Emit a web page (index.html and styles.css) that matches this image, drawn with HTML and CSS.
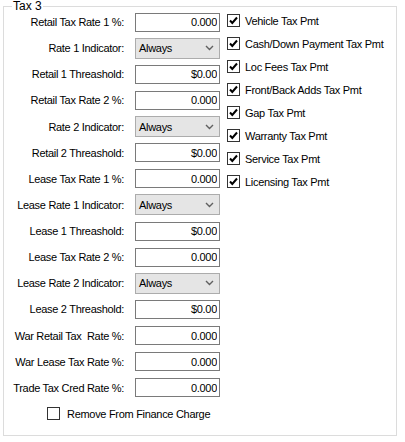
FILE: index.html
```html
<!DOCTYPE html>
<html lang="en">
<head>
  <meta charset="UTF-8" />
  <title>Tax 3</title>
  <link rel="stylesheet" href="styles.css">
</head>
<body>
  <fieldset class="group">
    <legend>Tax 3</legend>
    <div class="cols">
      <div class="fields">
        <label>Retail Tax Rate 1 %:</label>
        <input class="num" type="text" value="0.000">
        <label>Rate 1 Indicator:</label>
        <div class="combo"><span>Always</span><svg width="9" height="6" viewBox="0 0 9 6"><path d="M1 1 L4.5 4.5 L8 1" fill="none" stroke="#606060" stroke-width="1.4"/></svg></div>
        <label>Retail 1 Threashold:</label>
        <input class="num" type="text" value="$0.00">
        <label>Retail Tax Rate 2 %:</label>
        <input class="num" type="text" value="0.000">
        <label>Rate 2 Indicator:</label>
        <div class="combo"><span>Always</span><svg width="9" height="6" viewBox="0 0 9 6"><path d="M1 1 L4.5 4.5 L8 1" fill="none" stroke="#606060" stroke-width="1.4"/></svg></div>
        <label>Retail 2 Threashold:</label>
        <input class="num" type="text" value="$0.00">
        <label>Lease Tax Rate 1 %:</label>
        <input class="num" type="text" value="0.000">
        <label>Lease Rate 1 Indicator:</label>
        <div class="combo"><span>Always</span><svg width="9" height="6" viewBox="0 0 9 6"><path d="M1 1 L4.5 4.5 L8 1" fill="none" stroke="#606060" stroke-width="1.4"/></svg></div>
        <label>Lease 1 Threashold:</label>
        <input class="num" type="text" value="$0.00">
        <label>Lease Tax Rate 2 %:</label>
        <input class="num" type="text" value="0.000">
        <label>Lease Rate 2 Indicator:</label>
        <div class="combo"><span>Always</span><svg width="9" height="6" viewBox="0 0 9 6"><path d="M1 1 L4.5 4.5 L8 1" fill="none" stroke="#606060" stroke-width="1.4"/></svg></div>
        <label>Lease 2 Threashold:</label>
        <input class="num" type="text" value="$0.00">
        <label>War Retail Tax&nbsp; Rate %:</label>
        <input class="num" type="text" value="0.000">
        <label>War Lease Tax Rate %:</label>
        <input class="num" type="text" value="0.000">
        <label>Trade Tax Cred Rate %:</label>
        <input class="num" type="text" value="0.000">
        <div class="check remove"><span class="box"></span>Remove From Finance Charge</div>
      </div>
      <div class="checks">
        <div class="check"><span class="box"><svg width="11" height="11" viewBox="0 0 11 11"><path d="M2 5.5 L4.3 8 L9 2.5" fill="none" stroke="#000" stroke-width="2"/></svg></span>Vehicle Tax Pmt</div>
        <div class="check"><span class="box"><svg width="11" height="11" viewBox="0 0 11 11"><path d="M2 5.5 L4.3 8 L9 2.5" fill="none" stroke="#000" stroke-width="2"/></svg></span>Cash/Down Payment Tax Pmt</div>
        <div class="check"><span class="box"><svg width="11" height="11" viewBox="0 0 11 11"><path d="M2 5.5 L4.3 8 L9 2.5" fill="none" stroke="#000" stroke-width="2"/></svg></span>Loc Fees Tax Pmt</div>
        <div class="check"><span class="box"><svg width="11" height="11" viewBox="0 0 11 11"><path d="M2 5.5 L4.3 8 L9 2.5" fill="none" stroke="#000" stroke-width="2"/></svg></span>Front/Back Adds Tax Pmt</div>
        <div class="check"><span class="box"><svg width="11" height="11" viewBox="0 0 11 11"><path d="M2 5.5 L4.3 8 L9 2.5" fill="none" stroke="#000" stroke-width="2"/></svg></span>Gap Tax Pmt</div>
        <div class="check"><span class="box"><svg width="11" height="11" viewBox="0 0 11 11"><path d="M2 5.5 L4.3 8 L9 2.5" fill="none" stroke="#000" stroke-width="2"/></svg></span>Warranty Tax Pmt</div>
        <div class="check"><span class="box"><svg width="11" height="11" viewBox="0 0 11 11"><path d="M2 5.5 L4.3 8 L9 2.5" fill="none" stroke="#000" stroke-width="2"/></svg></span>Service Tax Pmt</div>
        <div class="check"><span class="box"><svg width="11" height="11" viewBox="0 0 11 11"><path d="M2 5.5 L4.3 8 L9 2.5" fill="none" stroke="#000" stroke-width="2"/></svg></span>Licensing Tax Pmt</div>
      </div>
    </div>
  </fieldset>
</body>
</html>
```

FILE: styles.css
```css
body { margin: 0; background: #fff; font-family: "Liberation Sans", Arial, sans-serif; font-size: 11px; letter-spacing: -0.3px; color: #000; }
.group { margin: 0 0 0 3px; padding: 0; width: 392px; height: 434px; border: 1px solid #dcdcdc; }
.group legend { margin-left: 8px; padding: 0 1px; line-height: 12px; font-size: 12px; letter-spacing: 0; }
.cols { display: flex; margin-top: -3px; }
.fields { display: grid; grid-template-columns: 121px 85px; grid-auto-rows: 26.14px; column-gap: 10px; align-items: center; }
.fields label { text-align: right; white-space: nowrap; padding-right: 1px; }
.num { box-sizing: border-box; width: 85px; height: 19px; border: 1px solid #7a7a7a; padding: 0 2px 0 0; margin: 0; text-align: right; font: inherit; letter-spacing: inherit; color: #000; background: #fff; }
.combo { box-sizing: border-box; width: 85px; height: 21px; border: 1px solid #acacac; background: #e5e5e5; display: flex; align-items: center; justify-content: space-between; padding: 0 5px 0 3px; }
.combo svg { display: block; }
.checks { margin-left: 7px; }
.check { display: flex; align-items: center; height: 23px; white-space: nowrap; }
.box { box-sizing: border-box; width: 13px; height: 13px; border: 1px solid #333; background: #fff; margin-right: 5px; display: flex; align-items: center; justify-content: center; }
.box svg { display: block; }
.remove { grid-column: 1 / 3; padding-left: 43px; height: 26px; }
.remove .box { margin-right: 7px; }
```
